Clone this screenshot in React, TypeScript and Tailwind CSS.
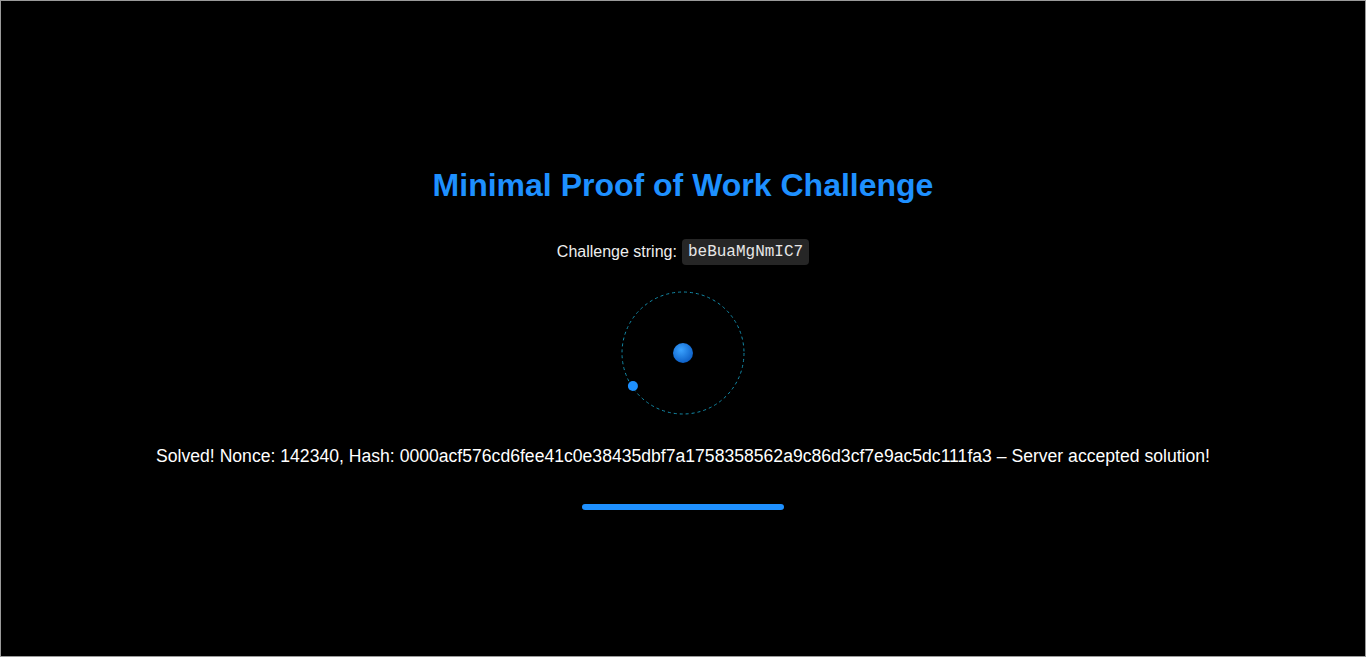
import React from "react";

const challenge = "beBuaMgNmIC7";
const nonce = 142340;
const hash = "0000acf576cd6fee41c0e38435dbf7a1758358562a9c86d3cf7e9ac5dc111fa3";

const Orbit: React.FC = () => {
  // angle of the little dot on the ring
  const angle = (146.6 * Math.PI) / 180;
  const cx = 65 + 60 * Math.cos(angle);
  const cy = 65 + 60 * Math.sin(angle);
  return (
    <svg width={130} height={130} viewBox="0 0 130 130">
      <defs>
        <radialGradient id="core" cx="40%" cy="35%" r="70%">
          <stop offset="0%" stopColor="#3aa2ff" />
          <stop offset="100%" stopColor="#0a5cc4" />
        </radialGradient>
      </defs>
      <circle
        cx={65}
        cy={65}
        r={61}
        fill="none"
        stroke="#148aa8"
        strokeWidth={1}
        strokeDasharray="3 3"
      />
      <circle cx={65} cy={65} r={10} fill="url(#core)" />
      <circle cx={cx} cy={cy} r={5} fill="#1e90ff" />
    </svg>
  );
};

const App: React.FC = () => {
  return (
    <div
      className="h-[657px] w-full bg-black border border-[#9a9a9a] flex flex-col items-center text-white"
      style={{ fontFamily: '"Liberation Sans", Arial, sans-serif' }}
    >
      <h1 className="mt-[166px] text-[32px] leading-[37px] font-bold text-[#1e90ff]">
        Minimal Proof of Work Challenge
      </h1>
      <div className="mt-[35px] flex items-center gap-[5px] text-[16px] text-[#eeeeee]">
        <span>Challenge string:</span>
        <code className="bg-[#262626] rounded-[4px] px-[6px] h-[26px] flex items-center text-[16px] text-[#e6e6e6] font-['Liberation_Mono',monospace]">
          {challenge}
        </code>
      </div>
      <div className="mt-[23px]">
        <Orbit />
      </div>
      <p className="mt-[28px] text-[17.6px] leading-[21px] text-white">
        Solved! Nonce: {nonce}, Hash: {hash} – Server accepted solution!
      </p>
      <div className="mt-[37px] w-[202px] h-[6px] rounded-full bg-[#1e90ff]" />
    </div>
  );
};

export default App;
